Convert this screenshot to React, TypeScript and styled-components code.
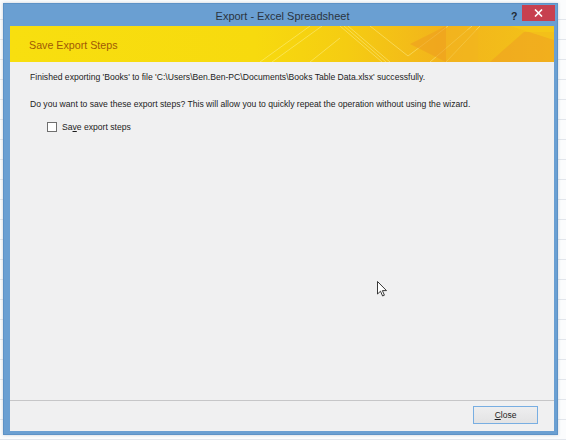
import styled, { createGlobalStyle } from 'styled-components'

const GlobalStyle = createGlobalStyle`
  html, body {
    margin: 0;
    padding: 0;
    background: #ffffff;
  }
  * {
    box-sizing: border-box;
  }
`

const Desktop = styled.div`
  width: 566px;
  height: 440px;
  padding: 3px 0 0 3px;
  background:
    repeating-linear-gradient(to bottom, transparent 0, transparent 19px, #e2e6ec 19px, #e2e6ec 20px),
    #fbfcfd;
  font-family: 'Liberation Sans', Arial, sans-serif;
`

const Window = styled.div`
  width: 555px;
  height: 432px;
  display: flex;
  flex-direction: column;
  background: #6a9fd2;
  border: 1px solid #5d92c6;
  padding: 0 3px 3px 6px;
  box-shadow: 0 0 3px rgba(60, 80, 110, 0.25);
`

const TitleBar = styled.div`
  height: 22px;
  flex: none;
  display: flex;
  align-items: center;
`

const Title = styled.div`
  flex: 1;
  text-align: center;
  font-size: 11px;
  color: #2a3440;
  padding-left: 44px;
  padding-top: 2px;
`

const HelpButton = styled.div`
  width: 8px;
  font-size: 10.5px;
  font-weight: bold;
  color: #1e2a36;
  margin-right: 3px;
  margin-top: 1px;
`

const CloseX = styled.div`
  width: 33px;
  height: 16px;
  margin-top: -4px;
  margin-right: -1px;
  background: #c7404f;
  display: flex;
  align-items: center;
  justify-content: center;
`

const Client = styled.div`
  flex: 1;
  display: flex;
  flex-direction: column;
  background: #f0f0f1;
  position: relative;
`

const Banner = styled.div`
  height: 36px;
  flex: none;
  position: relative;
  overflow: hidden;
  display: flex;
  align-items: center;
  padding-left: 19px;
  background: linear-gradient(to right, #f8df0f 0%, #f7da0e 45%, #f5cc12 62%, #f2b31c 80%, #f3c418 100%);
`

const BannerArt = styled.svg`
  position: absolute;
  left: 0;
  top: 0;
`

const BannerTitle = styled.div`
  position: relative;
  font-size: 10.7px;
  color: #a05a06;
  margin-top: 2px;
`

const Body = styled.div`
  flex: 1;
  padding: 9px 0 0 20px;
  display: flex;
  flex-direction: column;
  font-size: 8.6px;
  color: #1c1c1c;
`

const Line = styled.div<{ gap?: number }>`
  height: 12px;
  line-height: 12px;
  margin-top: ${({ gap }) => gap ?? 0}px;
  white-space: nowrap;
`

const CheckRow = styled.label`
  display: flex;
  align-items: center;
  gap: 5px;
  margin-top: 11px;
  margin-left: 17px;
  height: 12px;
  line-height: 12px;
`

const Box = styled.span`
  width: 10px;
  height: 10px;
  border: 1px solid #6f6f6f;
  background: #ffffff;
`

const Footer = styled.div`
  height: 31px;
  flex: none;
  border-top: 1px solid #c6c6c8;
  display: flex;
  justify-content: flex-end;
  padding: 5px 16px 0 0;
`

const Button = styled.div`
  width: 65px;
  height: 18px;
  border: 1px solid #78aee2;
  background: linear-gradient(to bottom, #eeeeef, #e3e3e4);
  display: flex;
  align-items: center;
  justify-content: center;
  font-size: 8.5px;
  color: #1c1c1c;
`

const Cursor = styled.svg`
  position: absolute;
  left: 367px;
  top: 255px;
`

export default function App() {
  return (
    <Desktop>
      <GlobalStyle />
      <Window>
        <TitleBar>
          <Title>Export - Excel Spreadsheet</Title>
          <HelpButton>?</HelpButton>
          <CloseX>
            <svg width="9" height="8" viewBox="0 0 9 8">
              <path d="M1 0.5 L8 7.5 M8 0.5 L1 7.5" stroke="#ffffff" strokeWidth="1.6" />
            </svg>
          </CloseX>
        </TitleBar>
        <Client>
          <Banner>
            <BannerArt width="544" height="36" viewBox="0 0 544 36">
              <g stroke="#fff6a0" strokeOpacity="0.55" strokeWidth="0.8" fill="none">
                <path d="M250 36 L300 0" />
                <path d="M262 36 L312 0" />
                <path d="M300 36 L330 12" />
                <path d="M330 0 L372 36" />
                <path d="M334 0 L376 36" />
                <path d="M338 0 L380 36" />
                <path d="M360 0 L398 30" />
                <path d="M398 30 L438 0" />
                <path d="M420 36 L462 0" />
                <path d="M470 0 L436 36" />
              </g>
              <path d="M400 18 L436 0 L436 36 Z" fill="#ee9e20" fillOpacity="0.6" />
              <path d="M436 4 L468 4 L468 36 L436 36 Z" fill="#f2b420" fillOpacity="0.5" />
              <path d="M480 36 L514 6 L544 6 L544 36 Z" fill="#ef9f22" fillOpacity="0.55" />
              <path d="M500 0 L544 0 L544 14 Z" fill="#f5cb18" fillOpacity="0.6" />
            </BannerArt>
            <BannerTitle>Save Export Steps</BannerTitle>
          </Banner>
          <Body>
            <Line>Finished exporting 'Books' to file 'C:\Users\Ben.Ben-PC\Documents\Books Table Data.xlsx' successfully.</Line>
            <Line gap={15}>
              Do you want to save these export steps? This will allow you to quickly repeat the operation without using the wizard.
            </Line>
            <CheckRow>
              <Box />
              <span>
                Sa<u>v</u>e export steps
              </span>
            </CheckRow>
          </Body>
          <Footer>
            <Button>
              <span>
                <u>C</u>lose
              </span>
            </Button>
          </Footer>
          <Cursor width="11" height="17" viewBox="0 0 11 17">
            <path
              d="M0.5 0.5 L0.5 13 L3.5 10.2 L5.6 15 L7.4 14.2 L5.4 9.6 L9.5 9.6 Z"
              fill="#ffffff"
              stroke="#222222"
              strokeWidth="0.9"
              strokeLinejoin="round"
            />
          </Cursor>
        </Client>
      </Window>
    </Desktop>
  )
}
